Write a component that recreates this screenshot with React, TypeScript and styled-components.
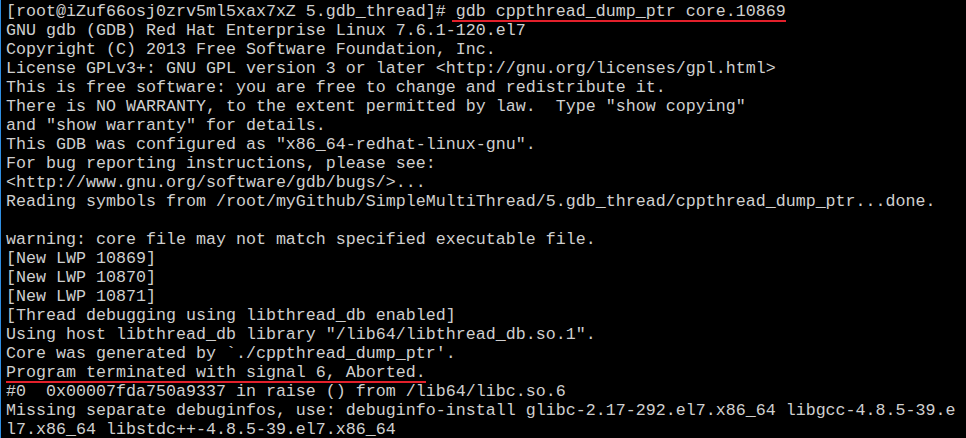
import React from "react";
import styled, { createGlobalStyle } from "styled-components";

const Global = createGlobalStyle`
  html, body { margin: 0; padding: 0; background: #000; }
  body { width: 966px; height: 438px; overflow: hidden; }
`;

const Terminal = styled.div`
  box-sizing: border-box;
  width: 966px;
  height: 438px;
  background: #000;
  border-left: 1px solid #2f8fe3;
  padding: 2px 0 0 5px;
  font-family: "Liberation Mono", "Courier New", monospace;
  font-size: 16.667px;
  line-height: 19px;
  color: #cfcfcf;
  overflow: hidden;
`;

const Line = styled.div`
  white-space: pre;
  height: 19px;
`;

const Mark = styled.span<{ $lead?: number }>`
  display: inline-block;
  margin-left: ${(p) => -(p.$lead ?? 0)}px;
  padding-left: ${(p) => p.$lead ?? 0}px;
  height: 18px;
  border-bottom: 2px solid #e3202b;
`;

const lines: string[] = [
  "GNU gdb (GDB) Red Hat Enterprise Linux 7.6.1-120.el7",
  "Copyright (C) 2013 Free Software Foundation, Inc.",
  "License GPLv3+: GNU GPL version 3 or later <http://gnu.org/licenses/gpl.html>",
  "This is free software: you are free to change and redistribute it.",
  'There is NO WARRANTY, to the extent permitted by law.  Type "show copying"',
  'and "show warranty" for details.',
  'This GDB was configured as "x86_64-redhat-linux-gnu".',
  "For bug reporting instructions, please see:",
  "<http://www.gnu.org/software/gdb/bugs/>...",
  "Reading symbols from /root/myGithub/SimpleMultiThread/5.gdb_thread/cppthread_dump_ptr...done.",
  "",
  "warning: core file may not match specified executable file.",
  "[New LWP 10869]",
  "[New LWP 10870]",
  "[New LWP 10871]",
  "[Thread debugging using libthread_db enabled]",
  'Using host libthread_db library "/lib64/libthread_db.so.1".',
  "Core was generated by `./cppthread_dump_ptr'.",
];

const tail: string[] = [
  "#0  0x00007fda750a9337 in raise () from /lib64/libc.so.6",
  "Missing separate debuginfos, use: debuginfo-install glibc-2.17-292.el7.x86_64 libgcc-4.8.5-39.e",
  "l7.x86_64 libstdc++-4.8.5-39.el7.x86_64",
];

export default function App() {
  return (
    <>
      <Global />
      <Terminal>
        <Line>
          {"[root@iZuf66osj0zrv5ml5xax7xZ 5.gdb_thread]# "}
          <Mark $lead={4}>gdb cppthread_dump_ptr core.10869</Mark>
        </Line>
        {lines.map((l, i) => (
          <Line key={i}>{l}</Line>
        ))}
        <Line>
          <Mark>Program terminated with signal 6, Aborted.</Mark>
        </Line>
        {tail.map((l, i) => (
          <Line key={"t" + i}>{l}</Line>
        ))}
      </Terminal>
    </>
  );
}
